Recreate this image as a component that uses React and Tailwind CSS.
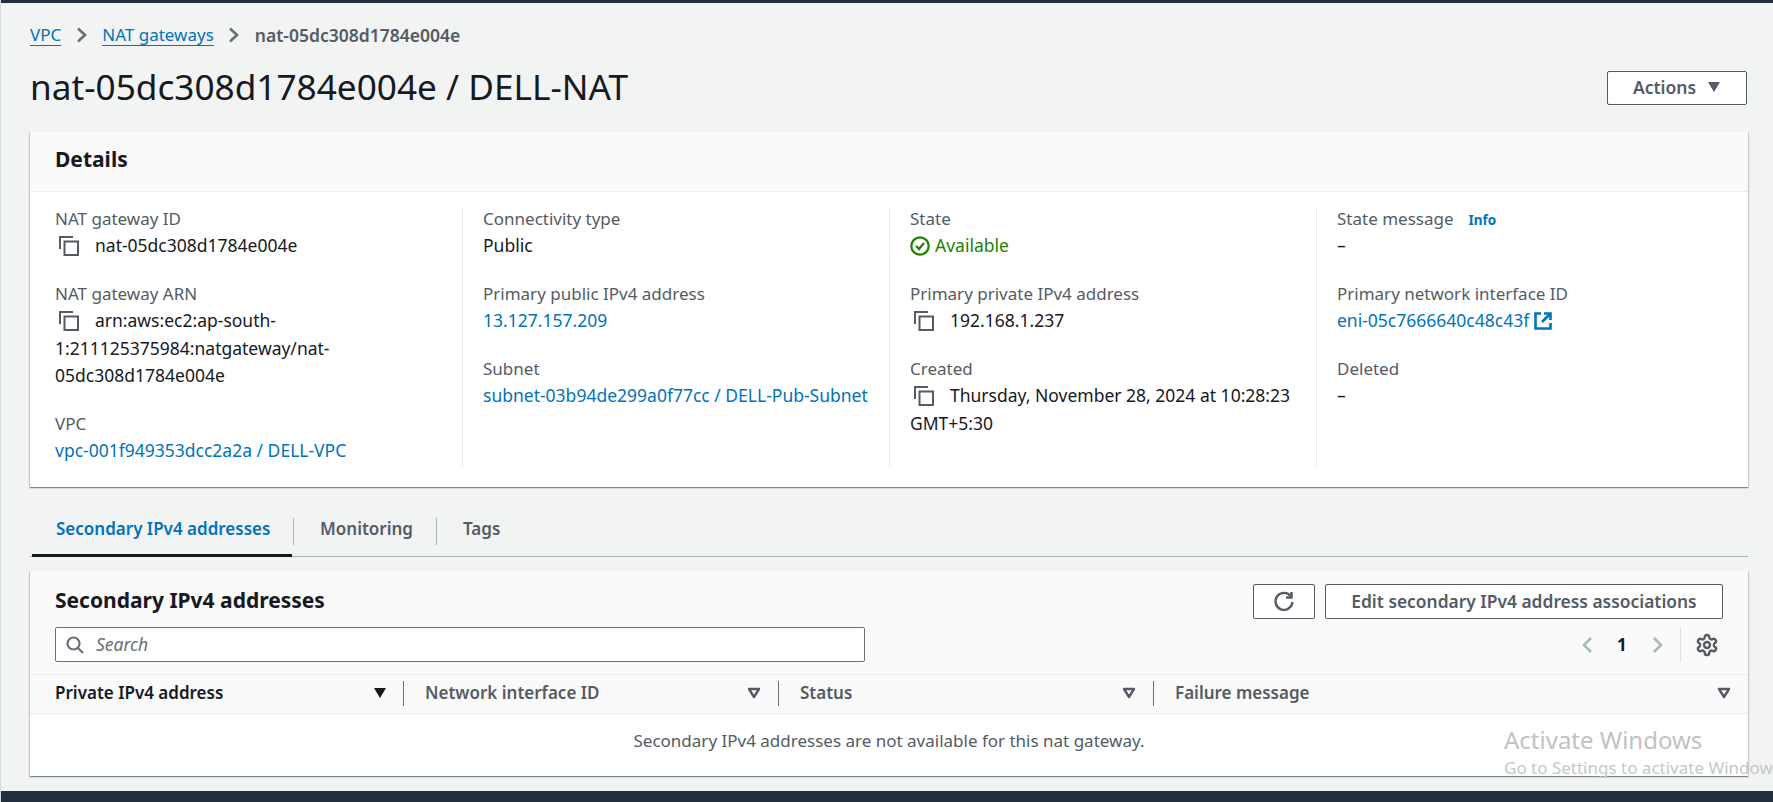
import React from "react";

const font = { fontFamily: '"Noto Sans", "Open Sans", sans-serif' };

function Copy() {
  return (
    <svg width="20" height="20" viewBox="0 0 20 20" fill="none" stroke="#545b64" strokeWidth="2" className="inline-block align-[-4px] ml-1 mr-[16px]">
      <path d="M1 13V1h13" />
      <rect x="5.5" y="5.5" width="13.5" height="13.5" />
    </svg>
  );
}

function Field({ label, children, extra }) {
  return (
    <div className="mb-[20.5px]">
      <div className="text-[#545b64] text-[17px] leading-[27px] h-[27px]">{label}{extra}</div>
      <div className="text-[#16191f] text-[17.5px] leading-[27.5px]">{children}</div>
    </div>
  );
}

const A = ({ children }) => <span className="text-[#0073bb]">{children}</span>;

function Col({ first, children }) {
  return (
    <div className={`border-l h-[260px] ${first ? "pl-[19px] border-transparent" : "pl-5 border-[#eaeded]"}`}>
      <div className="-mt-[2px]">{children}</div>
    </div>
  );
}

function Th({ children }) {
  return (
    <div className="flex items-center justify-between pl-[21px] pr-[17px] h-full">
      <span className="text-[#545b64]">{children}</span>
      <svg width="14" height="12" viewBox="0 0 14 12"><path d="M2 2h10L7 10z" fill="none" stroke="#545b64" strokeWidth="2.4" strokeLinejoin="round" /></svg>
    </div>
  );
}

const Crumb = ({ children }) => <span className="text-[#0073bb] text-[17px] underline underline-offset-[4px]">{children}</span>;

function Chevron() {
  return (
    <svg width="12" height="16" viewBox="0 0 12 16" className="mx-[14.5px]" fill="none" stroke="#687078" strokeWidth="2.6"><path d="M2 1.5l7 6.5-7 6.5" /></svg>
  );
}

const cardShadow = "shadow-[0_1px_1px_0_rgba(0,28,36,0.3),1px_1px_1px_0_rgba(0,28,36,0.15),-1px_1px_1px_0_rgba(0,28,36,0.15)]";

export default function App() {
  return (
    <div style={font} className="relative h-[802px] w-[1773px] overflow-hidden bg-[#f2f3f3] text-[17px] flex flex-col border-l border-[#d5dbdb]">
      <div className="h-[3px] bg-[#232f3e] shrink-0 -ml-px" />
      <div className="flex-1 pl-[29px] pr-[25px]">
        <nav className="h-[24px] mt-[20px] flex items-center text-[17.5px]">
          <Crumb>VPC</Crumb>
          <Chevron />
          <Crumb>NAT gateways</Crumb>
          <Chevron />
          <span className="text-[#545b64] font-semibold">nat-05dc308d1784e004e</span>
        </nav>
        <div className="flex items-center justify-between h-[34px] mt-[24px]">
          <h1 className="text-[35.2px] text-[#16191f] leading-[40px] mb-[4px]">nat-05dc308d1784e004e / DELL-NAT</h1>
          <button className="w-[140px] h-[34px] pb-[2px] mr-px border border-[#545b64] rounded-[2px] bg-white text-[#545b64] text-[17.5px] font-semibold flex items-center justify-center gap-[11px]">
            Actions
            <svg width="14" height="12" viewBox="0 0 14 12"><path d="M1 1h12L7 11z" fill="#545b64" /></svg>
          </button>
        </div>

        <section className={`mt-[27px] bg-white ${cardShadow}`}>
          <div className="h-[60px] bg-[#fafafa] border-b border-[#eaeded] pl-[25px] flex items-center">
            <h2 className="text-[21px] font-bold text-[#16191f] mb-[4px]">Details</h2>
          </div>
          <div className="grid grid-cols-4 w-[1708px] ml-[5px] pt-[15px] pb-[20px]">
            <Col first>
              <Field label="NAT gateway ID"><Copy />nat-05dc308d1784e004e</Field>
              <Field label="NAT gateway ARN"><Copy />arn:aws:ec2:ap-south-<br />1:211125375984:natgateway/nat-<br />05dc308d1784e004e</Field>
              <Field label="VPC"><A>vpc-001f949353dcc2a2a / DELL-VPC</A></Field>
            </Col>
            <Col>
              <Field label="Connectivity type">Public</Field>
              <Field label="Primary public IPv4 address"><A>13.127.157.209</A></Field>
              <Field label="Subnet"><A>subnet-03b94de299a0f77cc / DELL-Pub-Subnet</A></Field>
            </Col>
            <Col>
              <Field label="State">
                <span className="flex items-center gap-[5px] text-[#1d8102] h-[27.5px]">
                  <svg width="20" height="20" viewBox="0 0 20 20" fill="none" stroke="#1d8102" strokeWidth="2.2"><circle cx="10" cy="10" r="8.7" /><path d="M6 10l3 3 5-6" /></svg>
                  Available
                </span>
              </Field>
              <Field label="Primary private IPv4 address"><Copy />192.168.1.237</Field>
              <Field label="Created"><Copy />Thursday, November 28, 2024 at 10:28:23<br />GMT+5:30</Field>
            </Col>
            <Col>
              <Field label="State message" extra={<span className="ml-[15px] text-[13.5px] font-bold text-[#0073bb]">Info</span>}>–</Field>
              <Field label="Primary network interface ID">
                <span className="flex items-center gap-[5px] text-[#0073bb] h-[27.5px]">
                  eni-05c7666640c48c43f
                  <svg width="18" height="18" viewBox="0 0 18 18" fill="none" stroke="#0073bb" strokeWidth="2.6"><path d="M7 1.5H1.5v15h15V11" /><path d="M10 1.5h6.5V8" /><path d="M16 2l-8 8" /></svg>
                </span>
              </Field>
              <Field label="Deleted">–</Field>
            </Col>
          </div>
        </section>

        <div className="mt-[24px] h-[46px] border-b border-[#aab7b8] flex items-start font-semibold text-[17px]">
          <div className="w-[260px] h-[46px] flex items-center pl-[24px] pb-[7px] text-[#0073bb] border-b-[3px] border-[#16191f] ml-[2px] mr-px whitespace-nowrap">Secondary IPv4 addresses</div>
          <span className="h-[27px] w-px bg-[#aab7b8] mt-[7px]" />
          <span className="text-[#545b64] ml-[26px] w-[116px] leading-[36px]">Monitoring</span>
          <span className="h-[27px] w-px bg-[#aab7b8] mt-[7px]" />
          <span className="text-[#545b64] ml-[26px] leading-[36px]">Tags</span>
        </div>

        <section className={`mt-[14px] bg-white ${cardShadow}`}>
          <div className="bg-[#fafafa] pl-[25px] pr-[25px] h-[104px] border-b border-[#eaeded] flex">
            <div className="flex-1 pt-[13px]">
              <h2 className="text-[21px] font-bold leading-[32px] text-[#16191f]">Secondary IPv4 addresses</h2>
              <div className="mt-[11px] w-[810px] h-[35px] border border-[#687078] rounded-[2px] bg-white flex items-center pl-[10px] gap-[12px]">
                <svg width="18" height="18" viewBox="0 0 18 18" fill="none" stroke="#687078" strokeWidth="2.2"><circle cx="7.5" cy="7.5" r="6" /><path d="M12 12l5 5" /></svg>
                <span className="italic text-[#687078] text-[17.5px]">Search</span>
              </div>
            </div>
            <div className="flex flex-col items-end pt-[13px]">
              <div className="flex gap-[10px]">
                <button className="w-[62px] h-[35px] border border-[#545b64] rounded-[2px] bg-white flex items-center justify-center">
                  <svg width="22" height="22" viewBox="0 0 22 22" fill="none" stroke="#545b64" strokeWidth="2.4"><path d="M18 5.5A8.5 8.5 0 1 0 19.5 11" /><path d="M18.5 1V6.5H13" /></svg>
                </button>
                <button className="w-[398px] h-[35px] border border-[#545b64] rounded-[2px] bg-white text-[#545b64] text-[17.4px] font-semibold">Edit secondary IPv4 address associations</button>
              </div>
              <div className="flex items-center mt-[8px] h-[35px] w-[143px]">
                <svg width="12" height="18" viewBox="0 0 12 18" fill="none" stroke="#aab7b8" strokeWidth="2.6" className="ml-px"><path d="M10 2L3 9l7 7" /></svg>
                <span className="ml-[24px] font-bold text-[#16191f] w-[10px]">1</span>
                <svg width="12" height="18" viewBox="0 0 12 18" fill="none" stroke="#aab7b8" strokeWidth="2.6" className="ml-[25px]"><path d="M2 2l7 7-7 7" /></svg>
                <span className="ml-[16px] h-full w-px bg-[#dfe3e3]" />
                <svg width="24" height="24" viewBox="0 0 24 24" fill="none" stroke="#545b64" strokeWidth="2.4" className="ml-[14px]"><path d="M12.22 2h-.44a2 2 0 0 0-2 2v.18a2 2 0 0 1-1 1.73l-.43.25a2 2 0 0 1-2 0l-.15-.08a2 2 0 0 0-2.73.73l-.22.38a2 2 0 0 0 .73 2.73l.15.1a2 2 0 0 1 1 1.72v.51a2 2 0 0 1-1 1.74l-.15.09a2 2 0 0 0-.73 2.73l.22.38a2 2 0 0 0 2.73.73l.15-.08a2 2 0 0 1 2 0l.43.25a2 2 0 0 1 1 1.73V20a2 2 0 0 0 2 2h.44a2 2 0 0 0 2-2v-.18a2 2 0 0 1 1-1.73l.43-.25a2 2 0 0 1 2 0l.15.08a2 2 0 0 0 2.73-.73l.22-.39a2 2 0 0 0-.73-2.73l-.15-.08a2 2 0 0 1-1-1.74v-.5a2 2 0 0 1 1-1.74l.15-.09a2 2 0 0 0 .73-2.73l-.22-.38a2 2 0 0 0-2.73-.73l-.15.08a2 2 0 0 1-2 0l-.43-.25a2 2 0 0 1-1-1.73V4a2 2 0 0 0-2-2z" /><circle cx="12" cy="12" r="3" /></svg>
              </div>
            </div>
          </div>
          <div className="grid grid-cols-[374px_375px_375px_1fr] h-[39px] pb-[2px] bg-[#fafafa] border-b border-[#eaeded] font-semibold items-center">
            <div className="border-r border-[#687078] h-[25px] flex items-center justify-between pl-[25px] pr-[16px]">
              <span className="text-[#16191f]">Private IPv4 address</span>
              <svg width="14" height="12" viewBox="0 0 14 12"><path d="M1 1h12L7 11z" fill="#16191f" /></svg>
            </div>
            <div className="border-r border-[#687078] h-[25px]"><Th>Network interface ID</Th></div>
            <div className="border-r border-[#687078] h-[25px]"><Th>Status</Th></div>
            <div className="h-[25px]"><Th>Failure message</Th></div>
          </div>
          <div className="h-[62px] pb-[8px] flex items-center justify-center text-[#545b64]">Secondary IPv4 addresses are not available for this nat gateway.</div>
        </section>
      </div>
      <div className="h-[11px] bg-[#232f3e] shrink-0 -ml-px" />
      <div className="absolute left-[1503px] top-[724px] whitespace-nowrap text-[#bfc3c4] text-[24px] leading-[32px]">Activate Windows</div>
      <div className="absolute left-[1503px] top-[757px] whitespace-nowrap text-[#c4c8c9] text-[17px] leading-[22px]">Go to Settings to activate Windows</div>
    </div>
  );
}
